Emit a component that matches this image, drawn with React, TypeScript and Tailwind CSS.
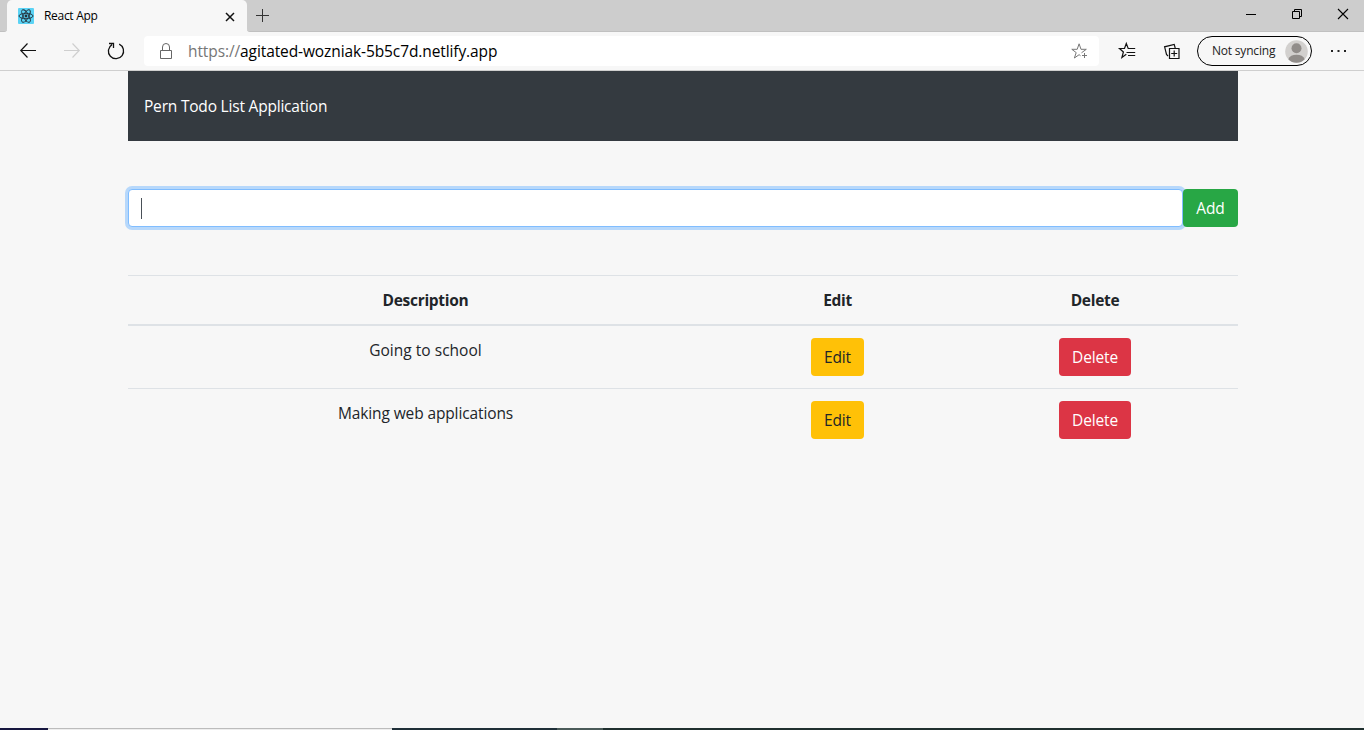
import React from "react";

const todos = [
  { text: "Going to school", tracking: "tracking-[0.02px]" },
  { text: "Making web applications", tracking: "tracking-[-0.12px]" },
];

function ReactLogo() {
  return (
    <svg width="16" height="16" viewBox="0 0 16 16" className="ml-[11px] shrink-0">
      <rect width="16" height="16" rx="1" fill="#5bd3f5" />
      <g fill="none" stroke="#23303a" strokeWidth="0.9">
        <ellipse cx="8" cy="8" rx="7" ry="2.7" />
        <ellipse cx="8" cy="8" rx="7" ry="2.7" transform="rotate(60 8 8)" />
        <ellipse cx="8" cy="8" rx="7" ry="2.7" transform="rotate(120 8 8)" />
      </g>
      <circle cx="8" cy="8" r="1.4" fill="#23303a" />
    </svg>
  );
}

function TabStrip() {
  return (
    <div className="flex h-8 items-stretch bg-[#f7f7f7]">
      <div className="w-[7px] rounded-br-[3px] border-b border-[#c0c0c0] bg-[#cdcdcd]" />
      <div className="flex h-8 w-[240px] items-center [background:linear-gradient(#cdcdcd_50%,#f7f7f7_50%)]">
        <div className="flex h-8 w-full items-center rounded-t-[5px] bg-[#f7f7f7]">
          <ReactLogo />
          <span className="ml-2.5 w-[160px] text-[12px] tracking-[-0.3px] whitespace-nowrap text-black">React App</span>
          <svg width="10" height="10" viewBox="0 0 10 10" className="mt-px mr-3 ml-auto" stroke="#111" strokeWidth="1.5">
            <path d="M1 1l8 8M9 1l-8 8" />
          </svg>
        </div>
      </div>
      <div className="flex flex-1 items-start rounded-bl-[3px] border-b border-[#c0c0c0] bg-[#cdcdcd]">
        <svg width="14" height="14" viewBox="0 0 14 14" className="mt-2 ml-2 shrink-0" stroke="#333" strokeWidth="1">
          <path d="M7.5 1v13M1 7.5h13" />
        </svg>
        <svg width="118" height="14" viewBox="0 0 118 14" fill="none" stroke="#000" className="mt-2 ml-auto">
          <path d="M0 6.5h10" />
          <path d="M46.5 3.5h7v7h-7zM48.5 3.5v-2h7v7h-2" />
          <path d="M92 1l10 10M102 1L92 11" strokeWidth="1.1" />
        </svg>
      </div>
    </div>
  );
}

function Toolbar() {
  return (
    <div className="flex h-[39px] items-center border-b border-[#cfcfcf] bg-[#f7f7f7]">
      <svg width="144" height="38" viewBox="0 0 144 38" fill="none" className="shrink-0">
        <path d="M36 18.5H21M27.5 11.5L20.8 18.5L27.5 25.5" stroke="#111" strokeWidth="1.2" />
        <path d="M64 18.5H79M72.5 11.5L79.2 18.5L72.5 25.5" stroke="#cfcfcf" strokeWidth="1.2" />
        <path d="M119.2 12.2A7.6 7.6 0 1 1 112 12.6M109 11.5H113.5V16" stroke="#111" strokeWidth="1.3" />
      </svg>
      <div className="flex h-[30px] w-[955px] shrink-0 items-center rounded-[4px] bg-white pr-2.5 pl-4">
        <svg width="12" height="17" viewBox="0 0 12 17" fill="none" stroke="#666" strokeWidth="1">
          <path d="M.5 7.5h11v8H.5zM2.5 7.5V4a3.5 3.5 0 0 1 7 0v3.5" />
        </svg>
        <span className="ml-4 pt-0.5 text-[15.5px] tracking-[-0.1px] whitespace-nowrap text-black">
          <span className="text-[#767676]">https://</span>agitated-wozniak-5b5c7d.netlify.app
        </span>
        <svg width="18" height="18" viewBox="0 0 18 18" fill="none" stroke="#777" strokeWidth="1" className="ml-auto">
          <path d="M10.5 10.8L15.3 7.3H10L8.1 1.8L6.2 7.3H.8L5.2 10.6L3.4 16L8.1 12.7L9.5 13.7M13.5 11v5M11 13.5h5" />
        </svg>
      </div>
      <svg width="98" height="38" viewBox="0 0 98 38" fill="none" stroke="#111" strokeWidth="1.2" className="shrink-0">
        <path d="M31.5 16.5H29.2L27.3 11.5L25.5 16.5H20.5L24.4 20L22.9 25.5L27.3 22.3M29 16.5h7.2M27.5 20.5h8.7M29 23.5h7.2" />
        <path d="M70.5 16.5h9.5v10h-9.5zM75.2 18.5v6M72.2 21.5h6M69 24L67.5 22.5L65.6 14.8L75.2 12.4L76.2 16" />
      </svg>
      <div className="flex h-[30px] w-[115px] shrink-0 items-center rounded-full border border-black pl-3.5">
        <span className="w-[64px] text-[12px] tracking-[-0.2px] whitespace-nowrap text-[#222]">Not syncing</span>
        <svg width="23" height="23" viewBox="0 0 23 23" className="ml-[9px] shrink-0">
          <circle cx="11.5" cy="11.5" r="11.3" fill="#d2d0ce" />
          <circle cx="11.5" cy="8.3" r="5" fill="#918d8a" />
          <path d="M3.3 19.2Q5.2 14.8 11.5 14.8T19.7 19.2A11.3 11.3 0 0 1 3.3 19.2Z" fill="#918d8a" />
        </svg>
      </div>
      <svg width="16" height="2" viewBox="0 0 16 2" fill="#222" className="ml-[19px]">
        <path d="M0 0h2v2H0zM6.5 0h2v2h-2zM13 0h2v2h-2z" />
      </svg>
    </div>
  );
}

function TodoTable() {
  return (
    <div className="mt-12 text-center text-[15.5px] leading-6">
      <div className="grid grid-cols-[595px_229px_286px] border-t border-b-2 border-[#dee2e6] py-3 font-bold tracking-[-0.3px]">
        <div>Description</div>
        <div>Edit</div>
        <div>Delete</div>
      </div>
      {todos.map((todo, i) => (
        <div
          key={todo.text}
          className={
            "grid grid-cols-[595px_229px_286px] py-3 tracking-[-0.15px] " + (i > 0 ? "border-t border-[#dee2e6]" : "")
          }
        >
          <div className={todo.tracking}>{todo.text}</div>
          <div>
            <button className="mx-auto block h-[38px] w-[53px] rounded bg-[#ffc107] text-[#212529]">Edit</button>
          </div>
          <div>
            <button className="mx-auto block h-[38px] w-[72px] rounded bg-[#dc3545] text-white">Delete</button>
          </div>
        </div>
      ))}
    </div>
  );
}

export default function App() {
  return (
    <div className="flex h-[730px] w-[1364px] flex-col overflow-hidden bg-[#f7f7f7] font-['Open_Sans',sans-serif] text-[#212529]">
      <TabStrip />
      <Toolbar />
      <main className="ml-32 w-[1110px] flex-1">
        <nav className="flex h-[70px] items-center bg-[#343a40] px-4 pt-0.5 text-[15.5px] tracking-[-0.2px] text-white">
          <span className="whitespace-nowrap">Pern Todo List Application</span>
        </nav>
        <div className="mt-12 flex h-[38px] text-[15.5px] tracking-[-0.15px]">
          <div className="flex w-[1055px] items-center rounded border border-[#80bdff] bg-white pl-3 shadow-[0_0_0_3px_#b7d8fb]">
            <span className="h-[21px] w-px bg-[#495057]" />
          </div>
          <button className="z-10 w-[55px] rounded bg-[#28a745] pt-0.5 text-white">Add</button>
        </div>
        <TodoTable />
      </main>
      <div className="flex h-0.5">
        <div className="w-12 bg-[#17173f]" />
        <div className="w-[344px] border-t border-[#bcbcbc] bg-[#eeeeee]" />
        <div className="w-[165px] bg-[#1f2f38]" />
        <div className="w-[46px] bg-[#4b5b59]" />
        <div className="flex-1 bg-[#20302f]" />
      </div>
    </div>
  );
}
